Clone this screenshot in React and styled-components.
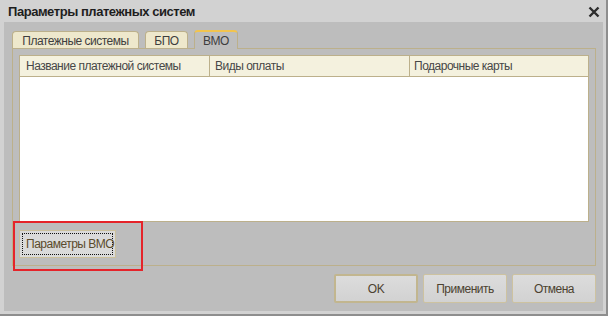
import React from 'react';
import styled, { createGlobalStyle } from 'styled-components';

const GlobalStyle = createGlobalStyle`
    body {
        margin: 0;
        font-family: "Liberation Sans", Arial, sans-serif;
        font-size: 12px;
        letter-spacing: -0.5px;
    }
`

const Window = styled.div`
    position: relative;
    width: 606px;
    height: 314px;
    background: #d2d2d2;
    border-right: 2px solid #8e8e8e;
    border-bottom: 2px solid #8e8e8e;
    display: flex;
    flex-direction: column;
`

const TitleBar = styled.div`
    height: 22px;
    display: flex;
    align-items: center;
    justify-content: space-between;
    padding: 0 6px 0 8px;
`

const Title = styled.div`
    font-size: 13px;
    font-weight: bold;
    color: #1e1e1e;
    letter-spacing: -0.45px;
`

const CloseIcon = styled.svg`
    width: 12px;
    height: 12px;
    margin-top: 2px;
`

const Body = styled.div`
    flex: 1;
    margin: 0 3px 3px 4px;
    background: #bdbdbd;
    padding: 8px 7px 8px 8px;
    display: flex;
    flex-direction: column;
`

const TabStrip = styled.div`
    display: flex;
    align-items: flex-end;
    gap: 6px;
    height: 18px;
    position: relative;
    z-index: 1;
`

const Tab = styled.div`
    box-sizing: border-box;
    width: ${p => p.$width}px;
    display: flex;
    align-items: center;
    justify-content: center;
    white-space: nowrap;
    border: 1px solid #bcb08b;
    border-bottom: none;
    border-top: ${p => p.$active ? '2px solid #f2c44e' : '1px solid #bcb08b'};
    border-radius: 4px 4px 0 0;
    background: ${p => p.$active ? '#bdbdbd' : '#eee8cc'};
    color: #3e3e3e;
    margin-bottom: ${p => p.$active ? '-1px' : '0'};
    height: ${p => p.$active ? 19 : 17}px;
    padding-top: ${p => p.$active ? 0 : 1}px;
`

const Panel = styled.div`
    height: 218px;
    box-sizing: border-box;
    border: 1px solid #bcb08b;
    padding: 6px;
    display: flex;
    flex-direction: column;
    gap: 8px;
`

const Table = styled.div`
    height: 167px;
    box-sizing: border-box;
    border: 1px solid #bcb08b;
    background: #ffffff;
`

const HeaderRow = styled.div`
    display: grid;
    grid-template-columns: 189px 200px 1fr;
    height: 21px;
    box-sizing: border-box;
    background: #f4f1de;
    border-bottom: 1px solid #bcb08b;
`

const HeaderCell = styled.div`
    display: flex;
    align-items: center;
    padding-left: ${p => p.$pad}px;
    color: #474747;
    white-space: nowrap;
    border-left: ${p => p.$first ? 'none' : '1px solid #bcb08b'};
`

const ParamsButton = styled.div`
    width: 97px;
    height: 28px;
    box-sizing: border-box;
    border: 1px solid #cbc09c;
    background: #dadada;
    padding: 2px;
`

const FocusRing = styled.div`
    height: 100%;
    box-sizing: border-box;
    border: 1px dotted #111;
    display: flex;
    align-items: center;
    padding-left: 3px;
    white-space: nowrap;
    color: #5a4b2c;
`

const Footer = styled.div`
    display: flex;
    justify-content: flex-end;
    gap: 5px;
    margin-top: 8px;
`

const DialogButton = styled.div`
    width: 84px;
    height: 29px;
    box-sizing: border-box;
    border: ${p => p.$default ? '2px solid #c2b68f' : '1px solid #cdc2a0'};
    border-radius: 2px;
    background: linear-gradient(#dcdcdc, #d2d2d2);
    display: flex;
    align-items: center;
    justify-content: center;
    color: #4c4230;
`

const Highlight = styled.div`
    position: absolute;
    left: 13px;
    top: 221px;
    width: 130px;
    height: 50px;
    box-sizing: border-box;
    border: 2px solid #e5242a;
    pointer-events: none;
`

const tabs = [
    { name: 'Платежные системы', width: 127 },
    { name: 'БПО', width: 43 },
    { name: 'ВМО', width: 44, active: true },
];

const columns = [
    { name: 'Название платежной системы', pad: 6 },
    { name: 'Виды оплаты', pad: 5 },
    { name: 'Подарочные карты', pad: 4 },
];

function App() {
    return (
        <Window>
            <GlobalStyle />
            <TitleBar>
                <Title>Параметры платежных систем</Title>
                <CloseIcon viewBox="0 0 12 12">
                    <path d="M1.5 1.5 L10.5 10.5 M10.5 1.5 L1.5 10.5" stroke="#2e2e2e" strokeWidth="2.4" />
                </CloseIcon>
            </TitleBar>
            <Body>
                <TabStrip>
                    {tabs.map(t => (
                        <Tab key={t.name} $active={t.active} $width={t.width}>{t.name}</Tab>
                    ))}
                </TabStrip>
                <Panel>
                    <Table>
                        <HeaderRow>
                            {columns.map((c, i) => (
                                <HeaderCell key={c.name} $pad={c.pad} $first={i === 0}>{c.name}</HeaderCell>
                            ))}
                        </HeaderRow>
                    </Table>
                    <ParamsButton>
                        <FocusRing>Параметры ВМО</FocusRing>
                    </ParamsButton>
                </Panel>
                <Footer>
                    <DialogButton $default>OK</DialogButton>
                    <DialogButton>Применить</DialogButton>
                    <DialogButton>Отмена</DialogButton>
                </Footer>
            </Body>
            <Highlight />
        </Window>
    )
}

export default App;
